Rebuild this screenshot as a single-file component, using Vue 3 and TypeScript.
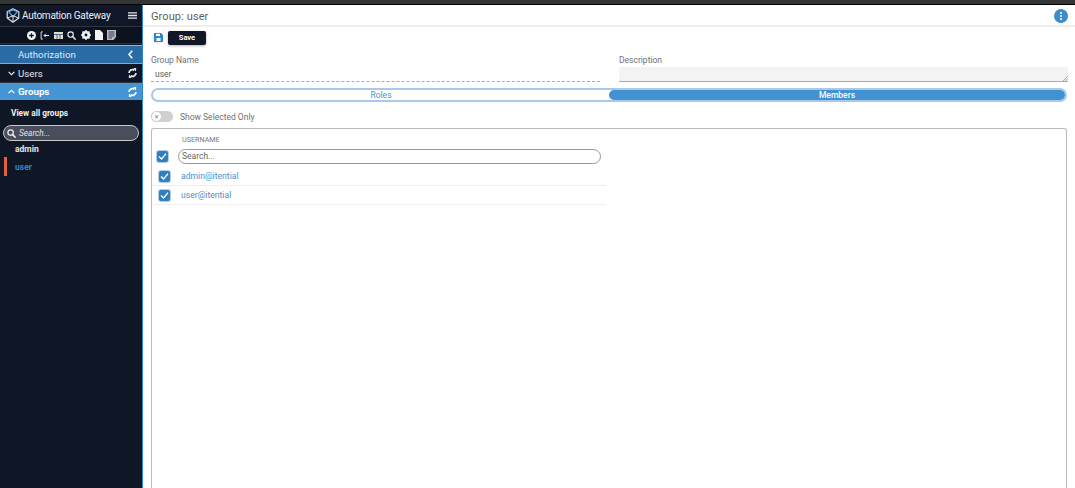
<script setup lang="ts">
const members: string[] = ['admin@itential', 'user@itential']
</script>

<template>
  <div class="page">
    <div class="topstrip"></div>
    <div class="shell">
      <aside class="side">
        <div class="brand">
          <svg class="logo" width="14" height="15" viewBox="0 0 14 15" fill="none">
            <path d="M7 .8 12.800 3.800V10L7 14.200 1.200 10V3.800Z" stroke="#dfe3e8" stroke-width="1.200" stroke-linejoin="round"/>
            <path d="M2.600 3.600 7 1.800l4.400 1.800L7 8.800Z" stroke="#5aa5dc" stroke-width="1.300" stroke-linejoin="round"/>
            <path d="M1.500 10 7 7.600 12.500 10M7 8v6" stroke="#dfe3e8" stroke-width="1"/>
          </svg>
          <span class="brand-name">Automation Gateway</span>
          <svg class="burger" width="9" height="7" viewBox="0 0 9 7"><path d="M0 .8h9M0 3.500h9M0 6.200h9" stroke="#e6e8ea" stroke-width="1.300"/></svg>
        </div>
        <div class="tools">
          <svg width="9" height="9" viewBox="0 0 10 10"><circle cx="5" cy="5" r="5" fill="#f2f2f2"/><path d="M5 2.400v5.200M2.400 5h5.200" stroke="#10182a" stroke-width="1.400"/></svg>
          <svg width="10" height="9" viewBox="0 0 10 10" fill="none"><path d="M2.500 1H.7v8h1.800" stroke="#f2f2f2" stroke-width="1"/><path d="M9.500 5H4M6 3 4 5l2 2" stroke="#f2f2f2" stroke-width="1.100"/></svg>
          <svg width="9" height="7" viewBox="0 0 9 7"><rect width="9" height="7" fill="#dcdcdc"/><path d="M3 2.500V7M6 2.500V7M0 2.500h9" stroke="#10182a" stroke-width=".6"/></svg>
          <svg width="9" height="9" viewBox="0 0 9 9" fill="none"><circle cx="3.600" cy="3.600" r="2.700" stroke="#f2f2f2" stroke-width="1.100"/><path d="M5.600 5.600 8.600 8.600" stroke="#f2f2f2" stroke-width="1.400"/></svg>
          <svg width="10" height="10" viewBox="0 0 10 10"><circle cx="5" cy="5" r="3.100" fill="none" stroke="#f2f2f2" stroke-width="2"/><path d="M5 0v10M0 5h10M1.500 1.500l7 7M8.500 1.500l-7 7" stroke="#f2f2f2" stroke-width="1.500"/><circle cx="5" cy="5" r="1.400" fill="#10182a"/></svg>
          <svg width="8" height="10" viewBox="0 0 8 10"><path d="M0 0h5l3 3v7H0z" fill="#f2f2f2"/></svg>
          <svg width="9" height="10" viewBox="0 0 9 10"><path d="M0 0h9v7L6.500 10H0z" fill="#b9bcc0"/><path d="M1.500 2h6M1.500 4h6M1.500 6h6M1.500 8h3.500" stroke="#10182a" stroke-width=".8"/></svg>
        </div>
        <div class="auth">
          <span>Authorization</span>
          <svg width="5" height="9" viewBox="0 0 5 9" fill="none"><path d="M4.200 .8.900 4.500 4.200 8.200" stroke="#fff" stroke-width="1.500"/></svg>
        </div>
        <div class="acc">
          <svg width="7" height="5" viewBox="0 0 7 5" fill="none"><path d="M.6.800 3.500 3.700 6.400.8" stroke="#e8e8e8" stroke-width="1.200"/></svg>
          <span>Users</span>
          <svg class="sync" width="9" height="10" viewBox="0 0 9 10" fill="none"><path d="M1 5A3.500 3.500 0 0 1 6.300 2.200M8 5A3.500 3.500 0 0 1 2.700 7.800" stroke="#ececec" stroke-width="1.700"/><path d="M5.200.3 8.200 0 8 3.400zM3.800 9.700.8 10 1 6.600z" fill="#ececec"/></svg>
        </div>
        <div class="acc open">
          <svg width="7" height="5" viewBox="0 0 7 5" fill="none"><path d="M.6 4.200 3.500 1.300 6.400 4.200" stroke="#fff" stroke-width="1.200"/></svg>
          <span>Groups</span>
          <svg class="sync" width="9" height="10" viewBox="0 0 9 10" fill="none"><path d="M1 5A3.500 3.500 0 0 1 6.300 2.200M8 5A3.500 3.500 0 0 1 2.700 7.800" stroke="#fff" stroke-width="1.700"/><path d="M5.200.3 8.200 0 8 3.400zM3.800 9.700.8 10 1 6.600z" fill="#fff"/></svg>
        </div>
        <div class="view-all">View all groups</div>
        <div class="side-search">
          <svg width="9" height="9" viewBox="0 0 9 9" fill="none"><circle cx="3.600" cy="3.600" r="2.700" stroke="#f2f2f2" stroke-width="1.200"/><path d="M5.600 5.600 8.600 8.600" stroke="#f2f2f2" stroke-width="1.500"/></svg>
          <span>Search...</span>
        </div>
        <div class="group-item first">admin</div>
        <div class="group-item active">user</div>
      </aside>

      <main class="main">
        <header class="head">
          <span class="title">Group: user</span>
          <span class="kebab"><i></i><i></i><i></i></span>
        </header>
        <div class="actions">
          <span class="save-icon">
            <svg width="9" height="9" viewBox="0 0 9 9"><path d="M0 0h7l2 2v7H0z" fill="#2f86cb"/><rect x="2" y=".8" width="4" height="2.200" fill="#fff"/><rect x="2.500" y="5" width="4" height="3" fill="#fff"/></svg>
          </span>
          <button class="save">Save</button>
        </div>
        <div class="fields">
          <div class="field">
            <label>Group Name</label>
            <div class="value">user</div>
          </div>
          <div class="field">
            <label>Description</label>
            <div class="textarea">
              <svg width="5" height="5" viewBox="0 0 5 5"><path d="M0 5 5 0M2.500 5 5 2.500" stroke="#888" stroke-width=".7"/></svg>
            </div>
          </div>
        </div>
        <div class="tabs">
          <div class="tab">Roles</div>
          <div class="tab on">Members</div>
        </div>
        <div class="toggle-row">
          <span class="toggle"><span class="knob">✕</span></span>
          <span>Show Selected Only</span>
        </div>
        <section class="panel">
          <div class="col-head">USERNAME</div>
          <div class="search-row">
            <span class="check"><svg width="11" height="11" viewBox="0 0 11 11" fill="none"><path d="M2 5.500 4.500 8 9 2.800" stroke="#fff" stroke-width="1.300"/></svg></span>
            <div class="panel-search">Search...</div>
          </div>
          <div v-for="m in members" :key="m" class="member">
            <span class="check"><svg width="11" height="11" viewBox="0 0 11 11" fill="none"><path d="M2 5.500 4.500 8 9 2.800" stroke="#fff" stroke-width="1.300"/></svg></span>
            <span class="member-name">{{ m }}</span>
          </div>
        </section>
      </main>
    </div>
  </div>
</template>

<style>
html, body { margin: 0; height: 100%; overflow: hidden; background: #fff; }
</style>

<style scoped>
.page { width: 1075px; height: 488px; display: flex; flex-direction: column; overflow: hidden; font-family: Roboto, "Liberation Sans", sans-serif; }
.topstrip { height: 4px; flex: none; background: #333536; border-bottom: 1px solid #000; }
.shell { flex: 1; display: flex; min-height: 0; }
.side { width: 142px; flex: none; background: #0f1727; border-right: 1px solid #2f86cb; color: #fff; display: flex; flex-direction: column; }
.brand { height: 22px; box-sizing: border-box; flex: none; display: flex; align-items: center; padding: 0 5px 0 6px; gap: 2px; background: #0f1728; border-bottom: 1px solid #30343c; }
.logo { flex: none; }
.brand-name { font-size: 10px; letter-spacing: -.25px; color: #eceef0; flex: 1; white-space: nowrap; }
.tools { height: 17px; box-sizing: border-box; flex: none; display: flex; align-items: center; gap: 4.300px; background: #0b1220; border-bottom: 1px solid #30343c; padding: 0 0 0 26.500px; }
.auth { margin-top: 1px; height: 19px; box-sizing: border-box; flex: none; display: flex; align-items: center; justify-content: space-between; background: #2a6ba5; padding: 0 9px 0 18px; font-size: 9.700px; color: #dfeaf4; border-bottom: 1px solid #8fa8bd; border-top: 1px solid #8fb6d4; }
.acc { height: 19px; box-sizing: border-box; flex: none; display: flex; align-items: center; gap: 3px; padding: 0 5px 0 8px; font-size: 9.700px; color: #e8e8e8; background: #0f1727; border-bottom: 1px solid #30343c; }
.acc .sync { margin-left: auto; }
.acc.open { height: 17px; background: #4595d4; color: #fff; font-weight: 700; border-bottom: 0; }
.view-all { margin: 6px 0 0 11px; height: 14px; font-size: 8.300px; font-weight: 700; line-height: 14px; color: #f0f0f0; }
.side-search { margin: 5px 3px 0 3px; height: 16px; box-sizing: border-box; flex: none; border: 1px solid #c8c8c8; border-radius: 8px; background: #4a4d5c; display: flex; align-items: center; gap: 3px; padding-left: 3px; font-size: 8.300px; font-style: italic; color: #e6e6e6; }
.group-item { height: 19px; line-height: 20px; font-size: 8.500px; font-weight: 700; color: #e4e4e4; padding-left: 15px; position: relative; }
.group-item.first { height: 16px; line-height: 16px; }
.group-item.active { color: #2f86cb; }
.group-item.active::before { content: ""; position: absolute; left: 4px; top: 0; width: 3px; height: 19px; background: #e2603a; }
.main { flex: 1; min-width: 0; display: flex; flex-direction: column; background: #fff; }
.head { height: 22px; box-sizing: border-box; flex: none; display: flex; align-items: center; justify-content: space-between; padding: 2px 7px 0 8px; border-bottom: 2px solid #eee; }
.title { font-size: 11px; color: #5e5e5e; letter-spacing: .1px; }
.kebab { width: 14px; height: 14px; border-radius: 50%; background: #3b8ccb; display: flex; flex-direction: column; align-items: center; justify-content: center; gap: 1px; }
.kebab i { width: 2px; height: 2px; background: #fff; border-radius: 50%; }
.actions { display: flex; align-items: center; gap: 4px; height: 21px; padding: 0 0 0 9px; flex: none; }
.save-icon { width: 12px; height: 12px; display: flex; align-items: center; justify-content: center; background: #eaf3fa; border-radius: 50%; }
.save { width: 38px; height: 14px; padding: 0; border: 0; border-radius: 2px; background: #0f1728; color: #fff; font: 700 7.500px Roboto, sans-serif; box-shadow: 0 1px 3px rgba(0,0,0,.3); }
.fields { display: grid; grid-template-columns: 449px 1fr; gap: 19px; padding: 6px 7px 0 8px; flex: none; }
.field label { display: block; font-size: 8.500px; line-height: 12px; color: #707070; }
.value { height: 13px; margin-top: 2px; padding-left: 4px; font-size: 8.500px; line-height: 12px; color: #5e5e5e; border-bottom: 1px dashed #aaa; box-sizing: content-box; }
.textarea { height: 14px; margin-top: 1px; border-radius: 2px 2px 0 0; background: #f3f3f3; border-bottom: 1px solid #aaa; display: flex; align-items: flex-end; justify-content: flex-end; }
.tabs { margin: 6px 8px 0 8px; height: 10px; display: flex; border: 2px solid #a8c9e8; border-radius: 8px; background: #fff; flex: none; }
.tab { flex: 1; text-align: center; font-size: 8.500px; line-height: 10px; color: #4a90cf; }
.tab.on { background: #4291d0; color: #fff; font-weight: 500; border-radius: 7px; }
.toggle-row { margin: 9px 0 0 8px; height: 11px; display: flex; align-items: center; gap: 7px; font-size: 8.500px; color: #707070; flex: none; }
.toggle { width: 22px; height: 11px; background: #d0d0d0; border-radius: 6px; display: inline-block; }
.knob { display: flex; width: 11px; height: 11px; border-radius: 50%; background: #fff; border: 1px solid #ccc; box-sizing: border-box; align-items: center; justify-content: center; font-size: 6px; color: #777; }
.panel { margin: 6px 8px 0 8px; flex: 1; border: 1px solid #bbb; border-bottom: 0; border-radius: 3px 3px 0 0; min-height: 0; }
.col-head { padding: 5px 0 0 30px; height: 12px; line-height: 12px; font-size: 7.200px; color: #777; }
.search-row { display: flex; align-items: center; gap: 10px; height: 15px; padding-left: 5px; margin-top: 3px; width: 449px; box-sizing: border-box; margin-bottom: 3px; }
.check { width: 11px; height: 11px; background: #2f7fc1; border-radius: 2px; display: inline-flex; flex: none; box-shadow: 0 0 0 1px #b5cee5; }
.panel-search { flex: 1; height: 13px; line-height: 13px; border: 1px solid #999; border-radius: 8px; padding-left: 3px; font-size: 8.500px; color: #666; }
.member { width: 454px; height: 19px; display: flex; align-items: center; gap: 11px; padding-left: 7px; box-sizing: border-box; border-bottom: 1px solid #eee; }
.member-name { font-size: 8.600px; color: #4a90cf; }
</style>
